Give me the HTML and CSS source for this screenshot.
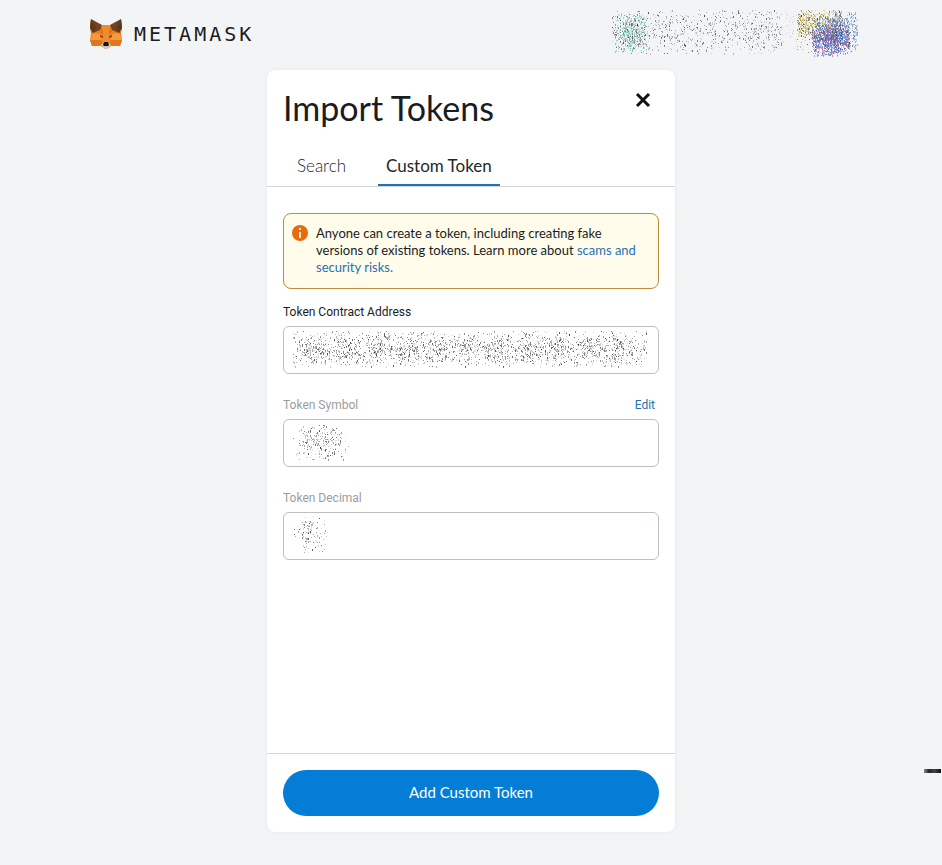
FILE: index.html
```html
<!DOCTYPE html>
<html lang="en">
<head>
  <meta charset="UTF-8" />
  <meta name="viewport" content="width=device-width, initial-scale=1" />
  <title>MetaMask</title>
  <link rel="stylesheet" href="styles.css">
</head>
<body>

<header class="app-header">
  <div class="logo">
    <svg class="fox" viewBox="0 0 32 30" aria-hidden="true">
      <path fill="#e98023" d="M1 1l9 5h12l9-5 1 8-1 6 1 6-2 6-7-1-5 3h-4l-5-3-7 1-2-6 1-6-1-6z"/>
      <path fill="#f08c2e" d="M11 6h10l-2 9 1 8h-8l1-8z"/>
      <path fill="#6f431f" d="M1 0l11 6-2 5-7 3-3-5zM31 0L20 6l2 5 7 3 3-5z"/>
      <path fill="#5b3a1c" d="M1 0l5 9-3 5-3-5zM31 0l-5 9 3 5 3-5z"/>
      <path fill="#f39a3c" d="M3 14l7 1 2 6H0zM29 14l-7 1-2 6h12z"/>
      <path fill="#e0761f" d="M0 21h11l1 5-3 1-7 0zM32 21H21l-1 5 3 1 7 0z"/>
      <path fill="#d9701c" d="M12 8l1 7-3-2zM20 8l-1 7 3-2z"/>
      <path fill="#a83a20" d="M10 16l3 1v2l-3-1zM22 16l-3 1v2l3-1z"/>
      <path fill="#d7c1b3" d="M11 26l3-3h4l3 3-3 4h-4z"/>
      <path fill="#161616" d="M14 23h4l1 3-1 1h-4l-1-1z"/>
    </svg>
    <span class="wordmark">METAMASK</span>
  </div>
  <canvas class="account" width="252" height="48" data-noise="account"></canvas>
</header>

<main class="card">
  <div class="card-head">
    <div class="title-row">
      <h1>Import Tokens</h1>
      <button class="close" aria-label="Close">
        <svg viewBox="0 0 16 16"><path d="M2 2l12 12M14 2L2 14"/></svg>
      </button>
    </div>
    <nav class="tabs">
      <button class="tab">Search</button>
      <button class="tab active">Custom Token</button>
    </nav>
  </div>

  <form class="card-body">
    <div class="warning">
      <svg class="info" viewBox="0 0 16 16" aria-hidden="true">
        <circle cx="8" cy="8" r="8" fill="#e8690f"/>
        <path d="M7 3h2v2H7zM7 7h2v6H7z" fill="#fdebc8"/>
      </svg>
      <p>Anyone can create a token, including creating fake versions of existing tokens. Learn more about <a href="#">scams and security risks.</a></p>
    </div>

    <div class="field">
      <div class="label-row">
        <label for="address">Token Contract Address</label>
      </div>
      <div class="input-wrap">
        <input type="text" id="address" />
        <canvas width="356" height="38" data-noise="address"></canvas>
      </div>
    </div>

    <div class="field disabled">
      <div class="label-row">
        <label for="symbol">Token Symbol</label>
        <a href="#">Edit</a>
      </div>
      <div class="input-wrap">
        <input type="text" id="symbol" />
        <canvas width="58" height="38" data-noise="symbol"></canvas>
      </div>
    </div>

    <div class="field disabled">
      <div class="label-row">
        <label for="decimal">Token Decimal</label>
      </div>
      <div class="input-wrap">
        <input type="text" id="decimal" />
        <canvas width="38" height="38" data-noise="decimal"></canvas>
      </div>
    </div>
  </form>

  <footer class="card-foot">
    <button class="btn">Add Custom Token</button>
  </footer>
</main>

<div class="marker"></div>

<script src="noise.js"></script>
</body>
</html>
```
FILE: styles.css
```css
* {
  box-sizing: border-box;
}

body {
  margin: 0;
  min-height: 100vh;
  background: #f2f4f6;
  color: #1a1c1f;
  font-family: Lato, "Open Sans", sans-serif;
}

button {
  border: none;
  background: none;
  font-family: inherit;
  color: inherit;
  cursor: pointer;
}

a {
  color: #2672b0;
  text-decoration: none;
}

/* header */
.app-header {
  display: flex;
  justify-content: space-between;
  align-items: center;
  height: 70px;
  max-width: 1200px;
  margin: 0 auto;
  padding: 0 80px 2px 90px;
}

.logo {
  display: flex;
  align-items: center;
  gap: 12px;
}

.fox {
  width: 32px;
  height: 30px;
}

.wordmark {
  font-family: "DejaVu Sans Mono", monospace;
  font-size: 20px;
  line-height: 24px;
  letter-spacing: 3px;
}

/* card */
.card {
  display: flex;
  flex-direction: column;
  width: calc(100% - 32px);
  max-width: 408px;
  min-height: 762px;
  margin: 0 auto 32px;
  background: #fff;
  border-radius: 8px;
  box-shadow: 0 0 4px rgba(0, 0, 0, 0.06);
}

.card-head {
  border-bottom: 1px solid #d3d6d9;
}

.title-row {
  display: flex;
  justify-content: space-between;
  align-items: flex-start;
  padding: 16px 16px 0;
}

h1 {
  margin: 0;
  font-size: 34px;
  line-height: 44px;
  font-weight: 400;
}

.close {
  padding: 6px 8px;
}

.close svg {
  display: block;
  width: 16px;
  height: 16px;
  fill: none;
  stroke: #111;
  stroke-width: 3;
}

.tabs {
  display: flex;
  gap: 24px;
  padding: 16px 22px 0;
}

.tab {
  padding: 8px 8px 6px;
  border-bottom: 2px solid transparent;
  font-size: 17px;
  font-weight: 300;
  line-height: 24px;
  color: #24272a;
}

.tab.active {
  border-color: #1f74b5;
  font-weight: 400;
}

.card-body {
  flex: 1;
  padding: 26px 16px;
}

.warning {
  display: flex;
  gap: 8px;
  padding: 11px 8px 12px;
  margin-bottom: 15px;
  background: #fffcec;
  border: 1px solid #bf8a3c;
  border-radius: 8px;
}

.info {
  flex: none;
  width: 16px;
  height: 16px;
}

.warning p {
  margin: 0;
  padding-right: 8px;
  font-size: 13px;
  line-height: 17px;
}

.field {
  margin-bottom: 23px;
}

.label-row {
  display: flex;
  justify-content: space-between;
  padding-right: 4px;
  margin-bottom: 6px;
  font-family: Roboto, sans-serif;
  font-size: 12px;
  line-height: 16px;
}

.disabled label {
  color: #9a9da0;
}

.input-wrap {
  position: relative;
}

.input-wrap input {
  display: block;
  width: 100%;
  height: 48px;
  padding: 0 12px;
  border: 1px solid #bbc0c5;
  border-radius: 6px;
  background: #fff;
  font-size: 16px;
}

.input-wrap canvas {
  position: absolute;
  top: 5px;
  left: 10px;
  pointer-events: none;
}

.card-foot {
  padding: 16px;
  border-top: 1px solid #d3d6d9;
}

.btn {
  display: block;
  width: 100%;
  padding: 11px 16px 13px;
  border-radius: 24px;
  background: #037dd6;
  color: #fff;
  font-size: 15px;
  line-height: 22px;
}

/* small tag on the window edge */
.marker {
  position: fixed;
  top: 769px;
  right: 1px;
  width: 17px;
  height: 4px;
  background: linear-gradient(to right, #888, #222 30%, #444 60%, #111);
}
```
FILE: noise.js
```js
// scatters dots over private values
let seed = 7;
function rand() {
  seed = (seed * 16807) % 2147483647;
  return seed / 2147483647;
}

// middle-heavy random value between 0 and 1
function mid() {
  return (rand() + rand()) / 2;
}

function scatter(ctx, count, x, y, w, h, colors, spread) {
  for (let i = 0; i < count; i++) {
    const px = x + (spread === "even" ? rand() : mid()) * w;
    const py = y + (rand() < 0.4 ? rand() : mid()) * h;
    ctx.globalAlpha = 0.15 + rand() * 0.6;
    ctx.fillStyle = colors[Math.floor(rand() * colors.length)];
    ctx.fillRect(Math.floor(px), Math.floor(py), 1, rand() < 0.3 ? 2 : 1);
  }
}

const greys = ["#222", "#555", "#888"];
const draw = {
  account(ctx) {
    scatter(ctx, 480, 4, 4, 36, 38, ["#4db89a", "#52c9a8", "#8fc9b9", "#567"]);
    scatter(ctx, 760, 2, 0, 170, 44, greys, "even");
    scatter(ctx, 80, 140, 0, 46, 44, ["#aaa", "#ccc"], "even");
    scatter(ctx, 620, 188, 0, 44, 28, ["#c9b64a", "#ddc34d", "#b59f3a", "#776c38"], "even");
    scatter(ctx, 1000, 202, 8, 38, 38, ["#2858b8", "#3970d0", "#5874c0", "#c05a80"]);
    scatter(ctx, 500, 202, 18, 38, 24, ["#2858b8", "#5874c0", "#c05a80"], "even");
    scatter(ctx, 380, 222, 0, 26, 43, ["#3c7fe0", "#69a0e8", "#444"], "even");
    scatter(ctx, 90, 186, 0, 22, 43, greys, "even");
  },
  address(ctx) {
    scatter(ctx, 1700, 0, 0, 354, 36, greys, "even");
    for (let x = 10; x < 330; x += 30) {
      scatter(ctx, 65, x, 6, 30, 26, greys);
    }
  },
  symbol(ctx) {
    scatter(ctx, 240, 0, 0, 56, 36, greys);
  },
  decimal(ctx) {
    scatter(ctx, 60, 0, 0, 36, 36, greys);
    scatter(ctx, 30, 0, 0, 36, 36, greys, "even");
    scatter(ctx, 25, 10, 2, 12, 14, greys);
  }
};

document.querySelectorAll("canvas[data-noise]").forEach(canvas => {
  draw[canvas.dataset.noise](canvas.getContext("2d"));
});
```
